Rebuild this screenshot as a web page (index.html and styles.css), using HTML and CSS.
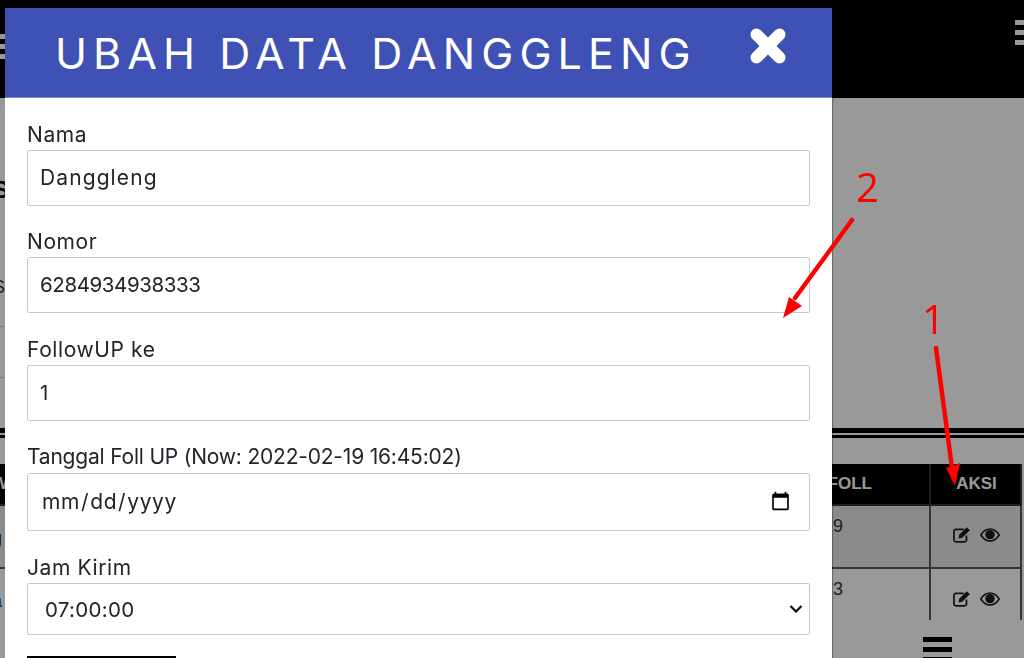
FILE: index.html
```html
<!DOCTYPE html>
<html lang="id">
<head>
<meta charset="utf-8">
<title>Ubah Data Danggleng</title>
<link rel="stylesheet" href="styles.css">
</head>
<body>
<div class="page">
  <header class="topbar">
    <div class="burger burger-left"><i></i><i></i><i></i></div>
    <div class="burger burger-right"><i></i><i></i><i></i></div>
  </header>
  <section class="summary">
    <h2 class="summary-title">S</h2>
    <div class="summary-row first">S</div>
    <div class="summary-row"></div>
  </section>
  <div class="divider"></div>
  <table class="data">
    <thead>
      <tr><th class="col-name"><span class="cut">W</span></th><th class="col-foll">FOLL</th><th class="col-act">AKSI</th></tr>
    </thead>
    <tbody>
      <tr class="odd">
        <td class="name-cell"><span class="cut">g</span></td><td class="date-cell">2022-02-19</td>
        <td class="act">
          <svg class="ic-edit" viewBox="0 0 18 17"><path d="M13.500 9.500V14a1.800 1.800 0 0 1-1.800 1.800H2.800A1.800 1.800 0 0 1 1 14V5.200A1.800 1.800 0 0 1 2.800 3.400h8" fill="none" stroke="#1c1c1c" stroke-width="1.700"/><path d="M6.200 8.800 13.800 1.200l3 3-7.600 7.600-3.600.6z" fill="#1c1c1c"/></svg>
          <svg class="ic-eye" viewBox="0 0 20 14"><path d="M.8 7C3.300 3 6.300 1 10 1s6.700 2 9.200 6c-2.500 4-5.500 6-9.200 6S3.300 11 .8 7z" fill="none" stroke="#1c1c1c" stroke-width="1.600"/><circle cx="10" cy="6.600" r="4.700" fill="#1c1c1c"/></svg>
        </td>
      </tr>
      <tr>
        <td class="name-cell"><span class="cut link">a</span></td><td class="date-cell">2022-03-23</td>
        <td class="act">
          <svg class="ic-edit" viewBox="0 0 18 17"><path d="M13.500 9.500V14a1.800 1.800 0 0 1-1.800 1.800H2.800A1.800 1.800 0 0 1 1 14V5.200A1.800 1.800 0 0 1 2.800 3.400h8" fill="none" stroke="#1c1c1c" stroke-width="1.700"/><path d="M6.200 8.800 13.800 1.200l3 3-7.600 7.600-3.600.6z" fill="#1c1c1c"/></svg>
          <svg class="ic-eye" viewBox="0 0 20 14"><path d="M.8 7C3.300 3 6.300 1 10 1s6.700 2 9.200 6c-2.500 4-5.500 6-9.200 6S3.300 11 .8 7z" fill="none" stroke="#1c1c1c" stroke-width="1.600"/><circle cx="10" cy="6.600" r="4.700" fill="#1c1c1c"/></svg>
        </td>
      </tr>
    </tbody>
  </table>
  <footer class="bottombar">
    <div class="burger burger-bottom"><i></i><i></i><i></i></div>
  </footer>
</div>

<div class="overlay">
  <div class="modal">
    <div class="modal-head">
      <h1 class="modal-title">UBAH DATA DANGGLENG</h1>
      <svg class="close" viewBox="0 0 36 36"><path d="M6.500 6.500 29.500 29.500M29.500 6.500 6.500 29.500" stroke="#fff" stroke-width="12" stroke-linecap="round"/></svg>
    </div>
    <form class="modal-body">
      <div class="field field-nama">
        <label class="lbl" for="nama">Nama</label>
        <input class="ctl" id="nama" type="text" value="Danggleng">
      </div>
      <div class="field">
        <label class="lbl" for="nomor">Nomor</label>
        <input class="ctl ctl-num" id="nomor" type="text" value="6284934938333">
      </div>
      <div class="field">
        <label class="lbl" for="foll">FollowUP ke</label>
        <input class="ctl ctl-num" id="foll" type="text" value="1">
      </div>
      <div class="field">
        <label class="lbl lbl-long" for="tgl">Tanggal Foll UP (Now: 2022-02-19 16:45:02)</label>
        <input class="ctl ctl-date" id="tgl" type="date">
      </div>
      <div class="field field-jam">
        <label class="lbl" for="jam">Jam Kirim</label>
        <select class="ctl ctl-select" id="jam"><option>07:00:00</option></select>
      </div>
      <button class="submit" type="button">Simpan</button>
    </form>
  </div>
</div>

<div class="notes">
  <svg class="arrows" viewBox="0 0 1024 658">
    <path d="M852 220 795 298" stroke="#f00" stroke-width="4.500" stroke-linecap="round" fill="none"/>
    <path d="M783 318 789 297 802 306z" fill="#f00"/>
    <path d="M936 348 952 468" stroke="#f00" stroke-width="4.500" stroke-linecap="round" fill="none"/>
    <path d="M955 486 946 468 960 463z" fill="#f00"/>
  </svg>
  <span class="note note-2">2</span>
  <span class="note note-1">1</span>
</div>
</body>
</html>
```
FILE: styles.css
```css
* { box-sizing: border-box; }
html, body { margin: 0; height: 658px; overflow: hidden; }
body { position: relative; background: #fff; font-family: "Liberation Sans", Arial, sans-serif; color: #222; }

.page { width: 1024px; height: 658px; overflow: hidden; display: flex; flex-direction: column; }

.topbar { height: 98px; background: #000; display: flex; justify-content: space-between; padding-top: 20px; flex: none; }
.burger { display: flex; flex-direction: column; gap: 5px; width: 29px; flex: none; }
.burger i { display: block; height: 5px; background: #fff; }
.burger-left { margin-left: -24px; margin-top: 14px; }
.burger-right { margin-right: -20px; }

.summary { height: 330px; flex: none; padding-top: 78px; }
.summary-title { margin: 0 0 0 -7px; font-size: 24px; line-height: 28px; color: #000; }
.summary-row { width: 300px; height: 51px; border-bottom: 1px solid #ccc; font-size: 18px; color: #333; margin-left: -7px; }
.summary-row.first { margin-top: 73px; height: 50px; }

.divider { height: 10px; flex: none; border-top: 5px solid #000; border-bottom: 3px solid #000; background: #fff; }

.data { border-collapse: collapse; width: 1022px; table-layout: fixed; margin-top: 26px; flex: none; font-size: 18px; }
.data th { height: 41px; background: #000; color: #fff; font-size: 17px; font-weight: 700; border: 2px solid #333; border-top: 0; text-align: left; padding: 0; }
.data td { height: 63px; border: 2px solid #5a5a5a; vertical-align: top; padding: 10px 0 0; color: #333; overflow: hidden; }
.data tr > :first-child { border-left: 0; }
.data tbody tr:last-child td { height: 52px; border-bottom: 0; }
.data tr.odd td { background: #e8e8e8; }
.col-foll { width: 200px; }
.col-act { width: 91px; }
.data th.col-foll { text-align: right; padding-right: 57px; }
.data th.col-act { text-align: center; padding-left: 2px; }
.data td.name-cell { padding-top: 22px; }
.cut { display: inline-block; margin-left: -8px; }
.link { color: #0d3b8c; }
.data td.date-cell { text-align: right; white-space: nowrap; padding-right: 86px; }
.act { text-align: center; white-space: nowrap; }
.data td.act { padding-top: 21px; padding-left: 2px; }
.data tr.odd td.act { padding-top: 20px; }
.ic-edit { width: 18px; height: 17px; vertical-align: top; }
.ic-eye { width: 20px; height: 14px; vertical-align: top; margin-left: 3px; margin-top: 2px; }

.bottombar { flex: 1; display: flex; justify-content: flex-end; padding: 17px 72px 0 0; background: #fff; }
.burger-bottom { gap: 5px; }
.burger-bottom i { background: #000; }

.overlay { position: fixed; inset: 0; background: rgba(0, 0, 0, .4); }
.modal { position: absolute; left: 5px; top: 8px; width: 827px; background: #fff; box-shadow: 1px 0 1px rgba(0, 0, 0, .3); }
.modal-head { height: 90px; background: #3f51b5; color: #fff; display: flex; padding: 0 46px 0 50px; justify-content: space-between; border-bottom: 1px solid #7d8ad6; }
.modal-title { margin: 21px 0 0; font-family: Inter, "Liberation Sans", sans-serif; font-weight: 400; font-size: 43px; line-height: 48px; letter-spacing: 6.1px; white-space: nowrap; }
.close { width: 36px; height: 36px; margin-top: 20px; flex: none; }

.modal-body { padding: 24px 22px 0; display: flex; flex-direction: column; height: 600px; font-family: Inter, "Liberation Sans", sans-serif; color: #212529; }
.field { display: flex; flex-direction: column; margin-bottom: 24px; }
.field-nama { margin-bottom: 23px; }
.field-jam { margin-bottom: 21px; }
.lbl { font-size: 21px; line-height: 26px; height: 28px; white-space: nowrap; letter-spacing: .6px; }
.lbl-long { letter-spacing: -.2px; line-height: 24px; }
.ctl { display: block; width: 783px; height: 56px; border: 1px solid #c8c8c8; border-radius: 2px; background: #fff; font: 400 21px Inter, "Liberation Sans", sans-serif; letter-spacing: 1.1px; color: #212529; padding: 0 12px 2px; outline: 0; }
.ctl-num { font-size: 20.500px; letter-spacing: -.4px; }
.ctl-date { height: 58px; padding: 0 12px 2px 13px; letter-spacing: .6px; }
.ctl-date::-webkit-calendar-picker-indicator { width: 21px; height: 21px; padding: 0; margin: 0 6px 0 0; }
.ctl-select { height: 52px; padding: 0 12px 0 17px; font-size: 20.500px; letter-spacing: .3px; appearance: none; background: #fff url("data:image/svg+xml,%3Csvg xmlns='http://www.w3.org/2000/svg' viewBox='0 0 14 8'%3E%3Cpath d='M1.500 1 7 6.500 12.500 1' fill='none' stroke='%23111' stroke-width='2.200'/%3E%3C/svg%3E") no-repeat right 6px center / 14px 8px; }
.submit { width: 149px; height: 44px; background: #000; color: #fff; border: 0; font: 400 18px Inter, sans-serif; flex: none; }

.notes { position: fixed; inset: 0; pointer-events: none; }
.arrows { position: absolute; left: 0; top: 0; width: 1024px; height: 658px; }
.note { position: absolute; font-family: "Open Sans", sans-serif; font-size: 40px; line-height: 40px; color: #f00; }
.note-2 { left: 856px; top: 167px; }
.note-1 { left: 922px; top: 299px; }
```
